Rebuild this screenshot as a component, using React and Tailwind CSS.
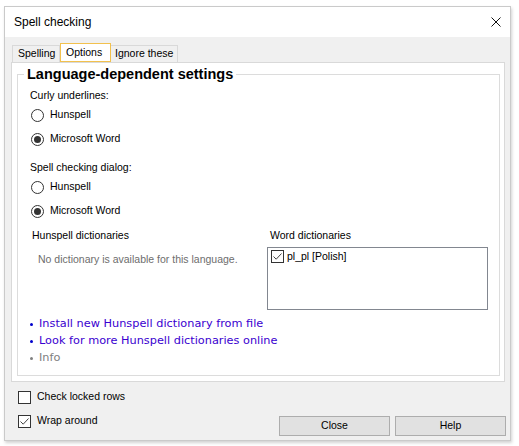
const SANS = { fontFamily: '"Liberation Sans", Arial, sans-serif' };

function Radio({ checked, label }) {
  return (
    <div className="flex h-[20px] items-center">
      <span className="ml-[1px] flex h-[13px] w-[13px] items-center justify-center rounded-full border border-[#333] bg-white">
        {checked && <span className="h-[7px] w-[7px] rounded-full bg-[#333]" />}
      </span>
      <span className="ml-[6px]">{label}</span>
    </div>
  );
}

function CheckBox({ checked }) {
  return (
    <span className="flex h-[13px] w-[13px] shrink-0 items-center justify-center border border-[#333] bg-white">
      {checked && (
        <svg viewBox="0 0 11 11" className="h-[11px] w-[11px]" fill="none" stroke="#444" strokeWidth="1">
          <path d="M1.5 5.5 4.2 8.2 9.5 2.5" />
        </svg>
      )}
    </span>
  );
}

function Link({ children, muted }) {
  return (
    <div
      className={`flex h-[17px] items-center text-[11.3px] ${muted ? "text-[#808080]" : "text-[#3a00d0]"}`}
      style={{ fontFamily: '"DejaVu Sans", Verdana, sans-serif' }}
    >
      <span className={`h-[3px] w-[3px] rounded-full ${muted ? "bg-[#808080]" : "bg-[#0000cc]"}`} />
      <span className="ml-[6px]">{children}</span>
    </div>
  );
}

export default function App() {
  return (
    <div className="h-[446px] w-[519px] bg-white pl-[4px] pt-[6px] text-[10.5px] text-black" style={SANS}>
      <div className="flex h-[435px] w-[507px] flex-col border border-[#cacaca] shadow-[1px_2px_3px_rgba(0,0,0,0.18)]">
        {/* title bar */}
        <div className="flex h-[30px] items-center justify-between bg-white pl-[9px] pr-[9px]">
          <span className="text-[12px]">Spell checking</span>
          <svg viewBox="0 0 10 10" className="h-[10px] w-[10px]" fill="none" stroke="#111" strokeWidth="1">
            <path d="M0.5 0.5 9.5 9.5M9.5 0.5 0.5 9.5" />
          </svg>
        </div>

        <div className="flex flex-1 flex-col bg-[#f0f0f0]">
          <div className="pl-[6px] pt-[6px]">
            {/* tabs */}
            <div className="flex h-[19px] items-end pl-[1px]">
              <div className="flex h-[17px] w-[48px] items-center border border-b-0 border-[#d9d9d9] pl-[5px]">Spelling</div>
              <div className="flex h-[19px] w-[51px] items-center border border-[#f2c14e] bg-white pl-[5px]">Options</div>
              <div className="flex h-[17px] w-[67px] items-center border border-b-0 border-l-0 border-[#d9d9d9] pl-[4px]">Ignore these</div>
            </div>

            {/* tab panel */}
            <div className="h-[320px] w-[494px] border border-[#d9d9d9] bg-white pl-[5px] pt-[11px]">
              <div className="relative h-[302px] w-[483px] border border-[#dcdcdc] pl-[12px] pt-[13px]">
                <span className="absolute left-[6px] top-[-10px] bg-white px-[3px] text-[14.5px] font-bold leading-[18px]">
                  Language-dependent settings
                </span>

                <div className="flex h-[16px] items-center">Curly underlines:</div>
                <div className="mt-[1px]"><Radio label="Hunspell" /></div>
                <div className="mt-[4px]"><Radio checked label="Microsoft Word" /></div>

                <div className="mt-[11px] flex h-[16px] items-center">Spell checking dialog:</div>
                <div className="mt-[1px]"><Radio label="Hunspell" /></div>
                <div className="mt-[4px]"><Radio checked label="Microsoft Word" /></div>

                <div className="mt-[7px] flex">
                  <div className="w-[237px] pl-[2px]">
                    <div className="flex h-[16px] items-center">Hunspell dictionaries</div>
                    <div className="mt-[8px] flex h-[16px] items-center pl-[6px] text-[#6d6d6d]">
                      No dictionary is available for this language.
                    </div>
                  </div>
                  <div>
                    <div className="flex h-[16px] items-center pl-[3px]">Word dictionaries</div>
                    <div className="mt-[3px] h-[63px] w-[221px] border border-[#828790] bg-white pl-[3px] pt-[2px]">
                      <div className="flex h-[13px] items-center">
                        <CheckBox checked />
                        <span className="ml-[3px]">pl_pl [Polish]</span>
                      </div>
                    </div>
                  </div>
                </div>

                <div className="mt-[6px]">
                  <Link>Install new Hunspell dictionary from file</Link>
                  <Link>Look for more Hunspell dictionaries online</Link>
                  <Link muted>Info</Link>
                </div>
              </div>
            </div>
          </div>

          {/* bottom */}
          <div className="flex flex-1 justify-between">
            <div className="pl-[13px] pt-[5px]">
              <div className="flex h-[20px] items-center">
                <CheckBox />
                <span className="ml-[6px]">Check locked rows</span>
              </div>
              <div className="mt-[4px] flex h-[20px] items-center">
                <CheckBox checked />
                <span className="ml-[6px]">Wrap around</span>
              </div>
            </div>
            <div className="flex items-end gap-[5px] pb-[4px] pr-[4px]">
              <button className="h-[20px] w-[111px] border border-[#adadad] bg-[#e1e1e1]">Close</button>
              <button className="h-[20px] w-[111px] border border-[#adadad] bg-[#e1e1e1]">Help</button>
            </div>
          </div>
        </div>
      </div>
    </div>
  );
}
